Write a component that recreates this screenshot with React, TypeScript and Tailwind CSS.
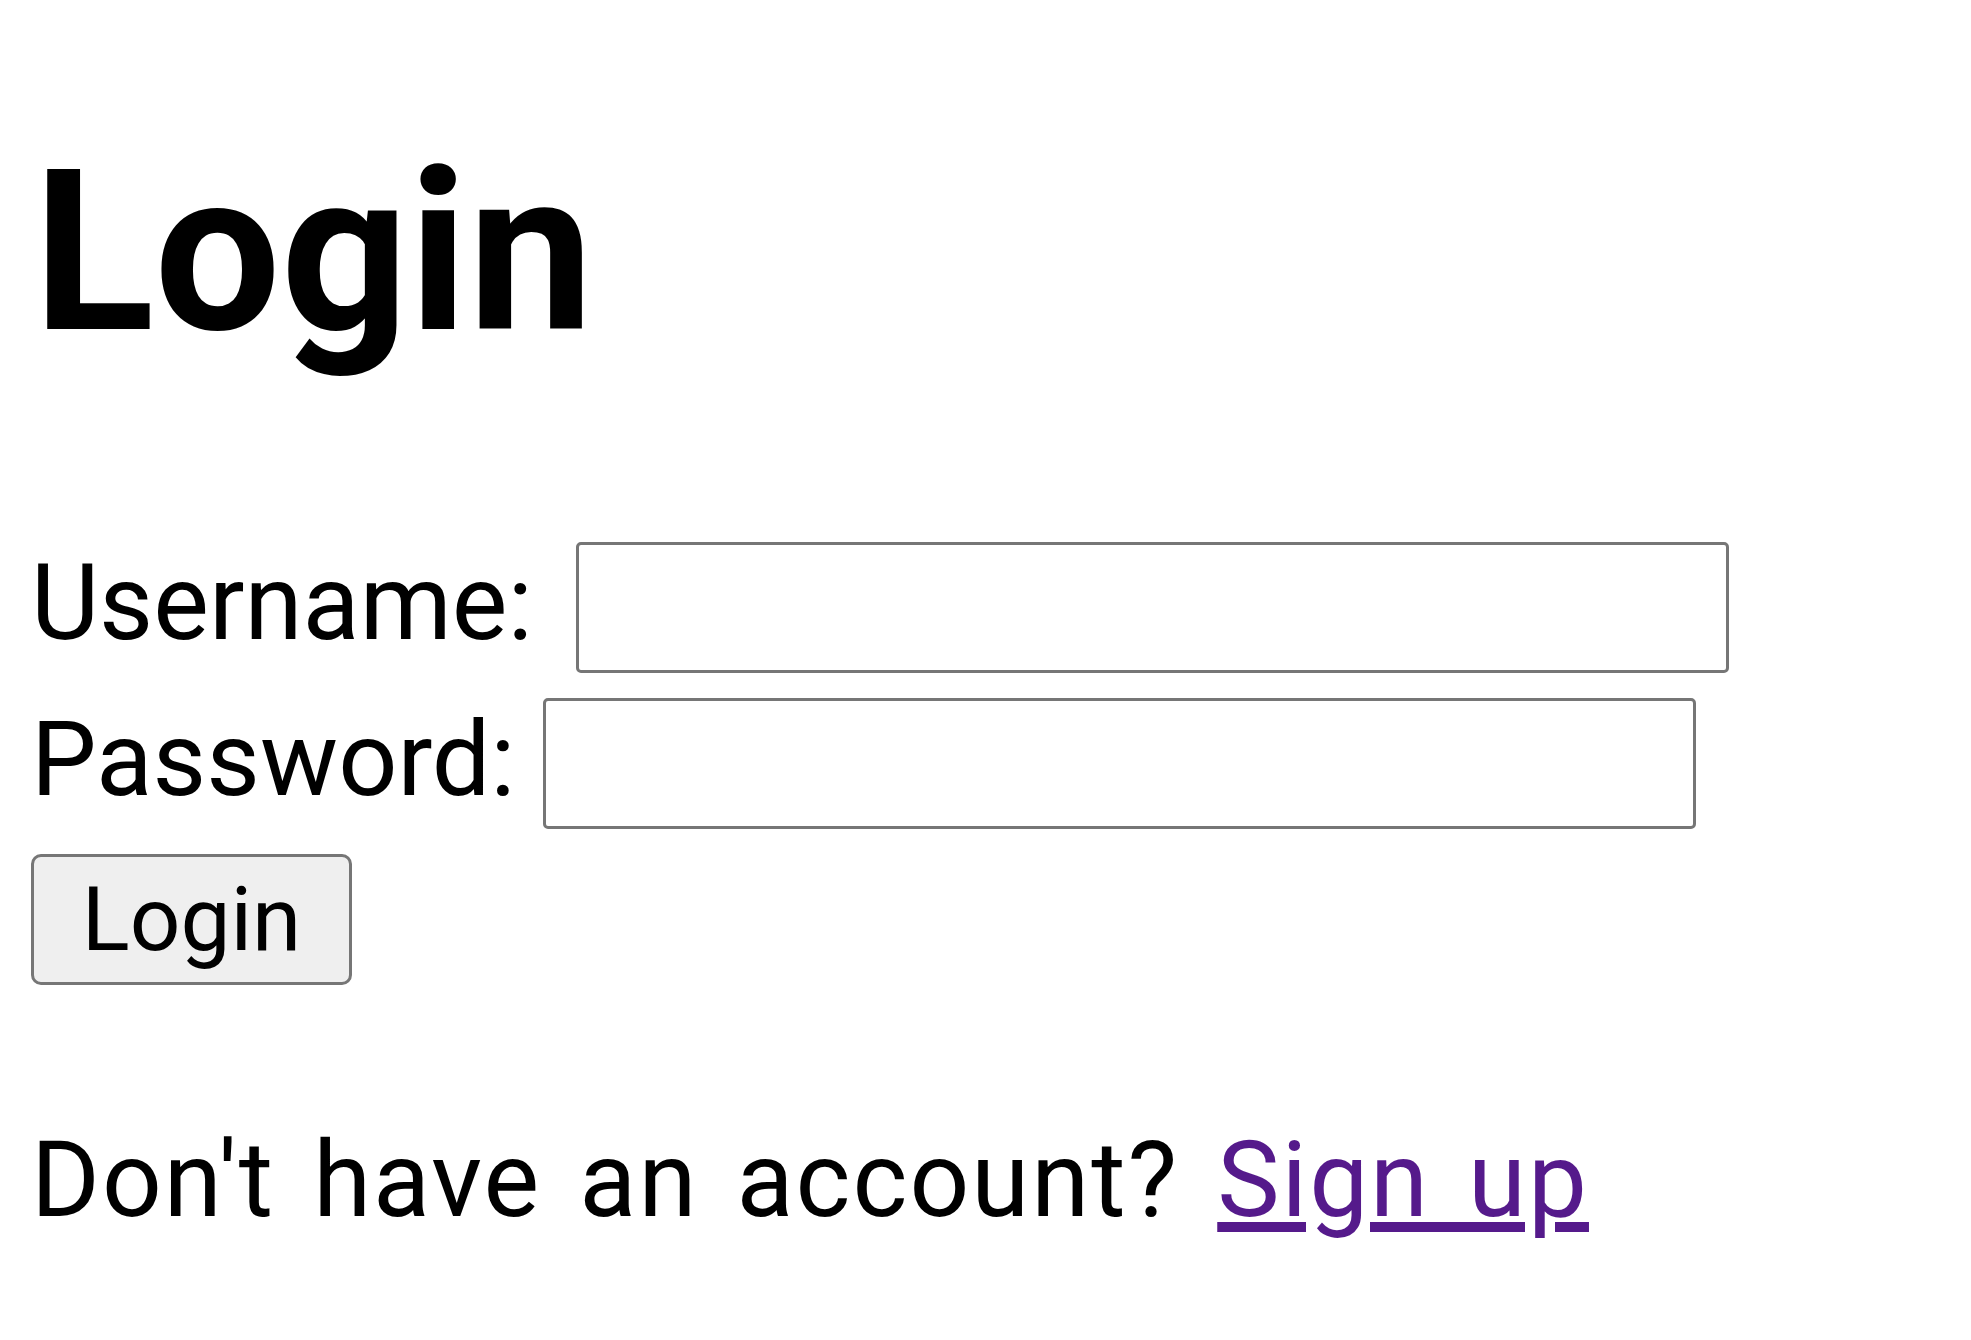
export default function App() {
  return (
    <div className="min-h-screen bg-white pl-[31px] pt-[141px] font-['Roboto','Liberation_Sans',sans-serif] text-black">
      {/* Title */}
      <h1 className="ml-[2px] text-[224px] font-bold leading-none">Login</h1>

      {/* Form */}
      <form className="mt-[177px] flex flex-col gap-[25px]">
        <div className="flex h-[131px] items-center gap-[43px]">
          <label className="mb-[8px] text-[105px] leading-none">Username:</label>
          <input
            type="text"
            className="h-[131px] w-[1153px] rounded-[5px] border-[3px] border-[#767676] bg-white"
          />
        </div>

        <div className="flex h-[131px] items-center gap-[27px]">
          <label className="mb-[8px] text-[104px] leading-none">Password:</label>
          <input
            type="password"
            className="h-[131px] w-[1153px] rounded-[5px] border-[3px] border-[#767676] bg-white"
          />
        </div>

        <div>
          <button
            type="button"
            className="h-[131px] w-[321px] rounded-[10px] border-[3px] border-[#767676] bg-[#efefef] text-[89px] leading-none"
          >
            Login
          </button>
        </div>
      </form>

      {/* Footer */}
      <p className="mt-[130px] text-[105px] leading-[131px] tracking-[2px] [word-spacing:10px]">
        Don't have an account?{" "}
        <a href="#" className="text-[#551a8b] underline">
          Sign up
        </a>
      </p>
    </div>
  );
}
